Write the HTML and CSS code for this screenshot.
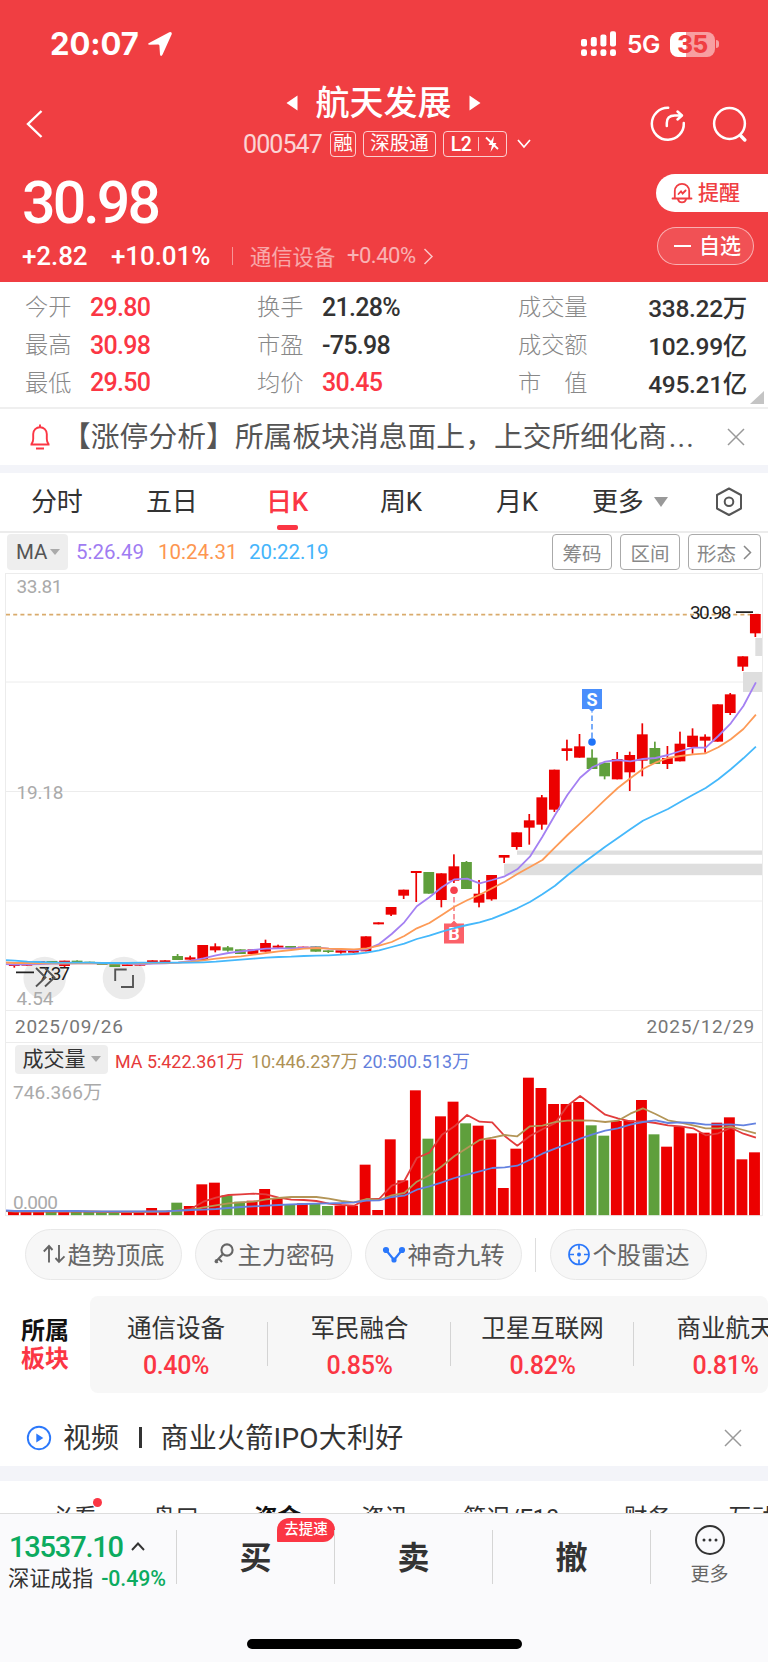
FILE: index.html
```html
<!DOCTYPE html>
<html lang="zh-CN">
<head>
<meta charset="utf-8">
<title>航天发展 000547</title>
<link rel="stylesheet" href="styles.css">
</head>
<body>
<div class="screen">
  <header class="header">
    <div class="status">
      <span class="clock">20:07</span>
      <svg class="loc" width="26" height="26" viewBox="0 0 26 26"><path d="M1.6 12.2 22.3 1.2Q25 .3 24.8 3L15.6 23.6Q14 26.4 13 23.4L12.4 14.6Q12.2 13.4 11 13.4L2.6 13.8Q.2 13.4 1.6 12.2Z" fill="#fff"/></svg>
      <svg class="signal" width="36" height="26" viewBox="0 0 36 26" fill="#fff"><rect x="0" y="8" width="6" height="7.5" rx="2"/><rect x="9.8" y="6" width="6" height="9.5" rx="2"/><rect x="19.4" y="3.4" width="6" height="12.1" rx="2"/><rect x="29" y="0.3" width="6" height="15.2" rx="2"/><rect x="0" y="18.2" width="6" height="6.8" rx="2.2"/><rect x="9.8" y="18.2" width="6" height="6.8" rx="2.2"/><rect x="19.4" y="18.2" width="6" height="6.8" rx="2.2"/><rect x="29" y="18.2" width="6" height="6.8" rx="2.2"/></svg>
      <span class="net">5G</span>
      <span class="battery">35</span><i class="nub"></i>
    </div>
    <div class="nav">
      <svg class="back" width="18" height="30" viewBox="0 0 18 30"><path d="M15.5 2 2 15l13.5 13" fill="none" stroke="#fff" stroke-width="2.4"/></svg>
      <div class="title">
        <div class="name">
          <svg width="12" height="16" viewBox="0 0 12 16"><path d="M11.5 .5v15L.5 8z" fill="#fff"/></svg>
          <h1>航天发展</h1>
          <svg width="12" height="16" viewBox="0 0 12 16"><path d="M.5 .5v15L11.500 8z" fill="#fff"/></svg>
        </div>
        <div class="codes">
          <span class="code">000547</span><span class="tag t1">融</span><span class="tag t2">深股通</span><span class="tag t3">L2<i></i><svg width="14" height="18" viewBox="0 0 14 18" fill="none" stroke="#fff" stroke-width="1.8"><path d="M9 1 3.500 10h3.500L5.500 17l6-9H8z" fill="#fff" stroke="none"/><path d="M1 2.500 13 14"/></svg></span>
          <svg width="14" height="10" viewBox="0 0 14 10"><path d="M1 1l6 7 6-7" fill="none" stroke="#fff" stroke-width="1.7"/></svg>
        </div>
      </div>
      <div class="tools">
        <svg width="36" height="36" viewBox="0 0 36 36" fill="none" stroke="#fff" stroke-width="2.5" stroke-linecap="round" stroke-linejoin="round"><path d="M18.200 1.800A16 16 0 1 0 33.800 17M16.800 20v-3q0-7.500 8-7.500h6M27.500 5.500l4.500 4-4.500 4"/></svg>
        <svg width="36" height="36" viewBox="0 0 36 36" fill="none" stroke="#fff" stroke-width="2.500" stroke-linecap="round"><circle cx="17.500" cy="17.500" r="15.400"/><path d="M28.500 29.500l4.300 4.500" stroke-width="3.400"/></svg>
      </div>
    </div>
    <div class="quote">
      <div>
        <div class="price">30.98</div>
        <div class="change"><span class="abs">+2.82</span><span class="pct">+10.01%</span><i></i><span class="ind">通信设备</span><span class="indp">+0.40%</span><svg width="11" height="17" viewBox="0 0 11 17"><path d="M1.500 1 9 8.500 1.500 16" fill="none" stroke="#fff" stroke-width="1.500"/></svg></div>
      </div>
      <div class="pills">
        <span class="alert"><svg width="22" height="22" viewBox="0 0 22 22" fill="none" stroke="#f03d42" stroke-width="1.800" stroke-linecap="round"><path d="M1.500 16.500h19M3.800 16V9a7.200 7.200 0 0 1 14.400 0v7M7 17.500a4.200 4.200 0 0 0 8 0M7.500 12l2.500-2.700 1.600 2.200 3-3"/></svg>提醒</span>
        <span class="fav"><i></i>自选</span>
      </div>
    </div>
  </header>

  <section class="stats">
    <span>今开</span><b class="up">29.80</b><span>换手</span><b>21.28%</b><span>成交量</span><b class="r">338.22万</b>
    <span>最高</span><b class="up">30.98</b><span>市盈</span><b>-75.98</b><span>成交额</span><b class="r">102.99亿</b>
    <span>最低</span><b class="up">29.50</b><span>均价</span><b class="up">30.45</b><span>市　值</span><b class="r">495.21亿</b>
    <svg class="corner" width="14" height="13" viewBox="0 0 14 13"><path d="M14 0v13H0z" fill="#c4c4c4"/></svg>
  </section>

  <section class="notice">
    <svg width="22" height="26" viewBox="0 0 22 26" fill="none" stroke="#fb3644" stroke-width="1.900" stroke-linejoin="round"><path d="M1.500 20.500h19M2.500 20Q4.200 18 4.200 15v-5a6.800 6.800 0 0 1 13.600 0v5q0 3 1.700 5M7 24.500h8"/><path d="M11 3V.5"/></svg>
    <p>【涨停分析】所属板块消息面上，上交所细化商<span>...</span></p>
    <svg class="x" width="18" height="18" viewBox="0 0 18 18"><path d="M1 1l16 16M17 1 1 17" stroke="#999" stroke-width="1.500"/></svg>
  </section>

  <nav class="periods">
    <span>分时</span><span>五日</span><span class="on">日K</span><span>周K</span><span>月K</span><span>更多</span>
    <svg class="caret" width="14" height="10" viewBox="0 0 14 10"><path d="M0 0h14L7 10z" fill="#999"/></svg>
    <svg class="hex" width="28" height="30" viewBox="0 0 28 30" fill="none" stroke="#555" stroke-width="2" stroke-linejoin="round"><path d="M14 1.500 26 8v13.500L14 28 2 21.500V8z"/><circle cx="14" cy="14.800" r="4.300"/></svg>
  </nav>

  <div class="mabar">
    <span class="chip">MA<i></i></span>
    <span class="m5">5:26.49</span><span class="m10">10:24.31</span><span class="m20">20:22.19</span>
    <span class="btns"><span>筹码</span><span>区间</span><span class="wide">形态<svg width="9" height="15" viewBox="0 0 9 15"><path d="M1 1l6.500 6.500L1 14" fill="none" stroke="#888" stroke-width="1.500"/></svg></span></span>
  </div>

  <div class="chart">
    <svg id="kline" class="kline" width="756" height="437" viewBox="6 573 756 437"></svg>
    <div class="dates"><span>2025/09/26</span><span>2025/12/29</span></div>
    <div class="volhead"><span class="chip2">成交量<i></i></span><span class="v5">MA 5:422.361万</span><span class="v10">10:446.237万</span><span class="v20">20:500.513万</span></div>
    <svg id="volume" class="vol" width="756" height="138" viewBox="6 1078 756 138"></svg>
  </div>

  <div class="features">
    <span class="feat"><svg width="24" height="24" viewBox="0 0 24 24" fill="none" stroke="#666" stroke-width="1.900"><path d="M7 20.500V4M1.800 9.500 7 4l3.500 4M17 3v16.500M13.500 16l3.500 3.800 5.500-5.500"/></svg>趋势顶底</span>
    <span class="feat"><svg width="24" height="24" viewBox="0 0 24 24" fill="none" stroke="#666" stroke-width="2.100"><circle cx="15" cy="8" r="5.600"/><path d="M11 12 3 20.500M6.500 16.500l3.500 3.500M3.500 17.500l2 3.500"/></svg>主力密码</span>
    <span class="feat"><svg width="24" height="24" viewBox="0 0 24 24" fill="none" stroke="#2b78fb" stroke-width="2.200"><path d="M4 8l8 10 8-10"/><circle cx="4" cy="8" r="2" fill="#2b78fb"/><circle cx="12" cy="18" r="1.500" fill="#2b78fb"/><circle cx="20" cy="8" r="2" fill="#2b78fb"/></svg>神奇九转</span>
    <i class="sep"></i>
    <span class="feat"><svg width="24" height="24" viewBox="0 0 24 24" fill="none" stroke="#2b78fb" stroke-width="1.700"><circle cx="12" cy="12.500" r="10"/><path d="M12 2.500v5M12 17.500v5M2 12.500h5M17 12.500h5"/><circle cx="12" cy="12.500" r="2" fill="#2b78fb" stroke="none"/></svg>个股雷达</span>
  </div>

  <div class="sectors">
    <div class="label">所属<em>板块</em></div>
    <div class="list">
      <div><span>通信设备</span><b>0.40%</b></div>
      <div><span>军民融合</span><b>0.85%</b></div>
      <div><span>卫星互联网</span><b>0.82%</b></div>
      <div><span>商业航天</span><b>0.81%</b></div>
    </div>
  </div>

  <div class="video">
    <svg width="26" height="26" viewBox="0 0 26 26"><circle cx="13" cy="13" r="11.200" fill="none" stroke="#2b78fb" stroke-width="1.900"/><path d="M10.300 8.500v9l7-4.500z" fill="#2b78fb"/></svg>
    <span>视频</span><i></i><span>商业火箭IPO大利好</span>
    <svg class="x" width="18" height="18" viewBox="0 0 18 18"><path d="M1 1l16 16M17 1 1 17" stroke="#999" stroke-width="1.500"/></svg>
  </div>

  <nav class="sections">
    <span class="dot">必看</span><span>盘口</span><span class="on">资金</span><span>资讯</span><span>简况/F10</span><span>财务</span><span>互动</span>
  </nav>

  <footer class="footer">
    <div class="index">
      <div class="pt">13537.10<svg width="14" height="9" viewBox="0 0 14 9"><path d="M1 8l6-6.500L13 8" fill="none" stroke="#333" stroke-width="1.900"/></svg></div>
      <div class="nm">深证成指<b>-0.49%</b></div>
    </div>
    <div class="act">买<span class="badge">去提速</span></div>
    <div class="act">卖</div>
    <div class="act">撤</div>
    <div class="more"><svg width="32" height="32" viewBox="0 0 32 32"><circle cx="16" cy="16" r="14" fill="none" stroke="#333" stroke-width="2"/><g fill="#333"><circle cx="10" cy="16" r="1.500"/><circle cx="16" cy="16" r="1.500"/><circle cx="22" cy="16" r="1.500"/></g></svg>更多</div>
    <i class="home"></i>
  </footer>
</div>
<script src="chart.js"></script>
</body>
</html>
```
FILE: styles.css
```css
*{box-sizing:border-box}
body{margin:0;background:#fff;font-family:Roboto,"Noto Sans CJK SC",sans-serif;color:#333}
i,em{font-style:normal}
svg{display:block;flex:none}
.screen{width:768px;height:1662px;overflow:hidden;display:flex;flex-direction:column;white-space:nowrap}
.screen>*{flex:none}

.header{height:281.5px;background:#f03e42;color:#fff}
.status{height:88px;display:flex;align-items:center;padding:0 49px 0 50px}
.clock{font:700 31px/36px Inter,sans-serif;letter-spacing:-.1px;width:97px}
.loc{margin-right:408px}
.signal{margin-right:10px}
.net{font:600 24.5px/30px Inter,sans-serif;width:33px;letter-spacing:-.5px;margin-right:10px}
.battery{width:45px;height:25px;border-radius:8px;background:linear-gradient(90deg,#fff 35%,rgba(255,255,255,.5) 35%);color:#f03e42;font:800 24px/25px Inter,sans-serif;text-align:center;letter-spacing:-.5px}
.nub{width:3px;height:8px;margin-left:1px;border-radius:0 4px 4px 0;background:rgba(255,255,255,.5)}
.nav{height:77px;display:grid;grid-template-columns:243px 290px 1fr;padding:0}
.back{margin:21px 0 0 26px}
.title{display:flex;flex-direction:column}
.name{display:flex;align-items:center;gap:17.500px;padding-left:43px;height:30px}
.name h1{margin:0;font-size:34px;line-height:30px;font-weight:500;width:136px}
.codes{display:flex;align-items:center;height:28px;margin-top:12px;font-size:20px}
.code{font-size:25px;letter-spacing:-.9px;width:87px;opacity:.78}
.tag{height:26px;border:1.500px solid rgba(255,255,255,.75);border-radius:4px;line-height:23px;text-align:center;font-size:19.500px}
.t1{width:26px;margin-right:7px}
.t2{width:73px;margin-right:7px}
.t3{width:64px;margin-right:10px;display:flex;align-items:center;justify-content:center;gap:6px;font-weight:500;letter-spacing:-.5px}
.t3 i{width:1px;height:14px;background:rgba(255,255,255,.7);margin-left:1px}
.tools{display:flex;gap:26px;padding:18px 0 0 116.500px}
.quote{display:flex;justify-content:space-between}
.price{font-size:59px;font-weight:500;line-height:60px;letter-spacing:-2.900px;padding:8px 0 0 22px}
.change{display:flex;align-items:center;height:30px;margin-top:8px;padding-left:22px;font-size:26px;font-weight:500}
.abs{width:89px;letter-spacing:-.1px}
.pct{width:121px;letter-spacing:-.1px}
.change i{width:1px;height:18px;background:rgba(255,255,255,.45);margin-right:17px}
.ind{font-size:21.300px;font-weight:400;opacity:.55;width:97px;padding-bottom:2px}
.indp{font-size:22px;font-weight:400;opacity:.6;width:76px;letter-spacing:-.5px;padding-bottom:1px}
.change svg{opacity:.7}
.pills{padding-top:9px;width:112px;font-size:21px;line-height:38px}
.alert{display:flex;align-items:center;height:38px;background:#fff;color:#f03e42;border-radius:19px 0 0 19px;padding-left:15px;gap:5px;font-weight:500}
.fav{display:flex;align-items:center;width:97px;height:38px;margin:15px 0 0 1px;border:1px solid rgba(255,255,255,.55);background:rgba(255,255,255,.1);border-radius:19px;padding-left:16px;gap:8px;font-weight:500}
.fav i{width:17px;height:2px;background:#fff}

.stats{position:relative;height:127px;border-bottom:2px solid #efefef;padding:6px 0 0 25px;display:grid;grid-template-columns:65px 167px 65px 196px 90px 139px;grid-auto-rows:37.700px;align-items:center;font-size:23.200px;color:#888;font-weight:300}
.stats span{padding-bottom:2px}
.stats b{font-weight:500;font-size:25px;letter-spacing:-.7px;color:#333;padding-top:2px}
.stats b.up{color:#fb3644}
.stats .r{text-align:right;letter-spacing:-.3px;font-size:24.500px;padding-top:1px}
.corner{position:absolute;right:4px;bottom:3px}

.notice{height:56px;display:flex;align-items:center;padding-left:29px}
.notice p{margin:0 0 0 11px;width:662px;font-size:28.800px;line-height:40px;color:#555;padding-top:1px}
.notice p span{margin-left:2px;letter-spacing:1.200px}
.x{margin-left:2.500px}

.periods{height:68px;border-top:8px solid #f3f4f9;border-bottom:2px solid #ececec;display:grid;grid-template-columns:115px 120px 114px 116px 96px 62px 61px 28px;align-items:center;padding-left:31px;font-size:26px;line-height:40px;letter-spacing:-.2px}
.on{position:relative}
.periods .on{color:#fb3644;font-weight:500}
.periods .on::after{content:"";position:absolute;left:11px;bottom:-8px;width:21px;height:5px;border-radius:2px;background:#fb3644}

.mabar{height:40px;display:flex;align-items:center;padding:0 7px 1px 7px;font-size:20.500px}
.chip{width:61px;height:36px;border-radius:4px;background:#eee;display:flex;align-items:center;padding-left:9px;gap:3px;color:#555}
.chip i,.chip2 i{border:5px solid transparent;border-top:6px solid #aaa;border-bottom:0}
.m5{color:#a07cf2;width:82px;margin-left:8px}
.m10{color:#fd9650;width:91px}
.m20{color:#45b5fb}
.btns{margin-left:auto;display:flex;gap:8px;color:#888;font-size:19.500px}
.btns span{width:60px;height:36px;border:1.500px solid #aaa;border-radius:4px;display:flex;align-items:center;justify-content:center}
.btns .wide{width:73px;gap:7px}

.chart{margin:0 5px;border:1px solid #ececec;border-top:0;border-bottom:0;height:643px}
.kline{overflow:visible}
.dates{height:33px;border-top:1px solid #ececec;border-bottom:1px solid #ececec;display:flex;justify-content:space-between;align-items:center;padding:1px 7px 0 9px;font-size:19px;letter-spacing:.75px;color:#777}
.volhead{height:35px;display:flex;align-items:center;font-size:17.900px;padding:0 0 1px 9px}
.chip2{width:93px;height:29px;border-radius:4px;background:#eee;display:flex;align-items:center;justify-content:center;gap:5px;font-size:21px;line-height:28px;margin-right:7px;padding-bottom:1px;color:#333}
.v5{width:136px;color:#e63a3a}
.v10{width:111.500px;color:#ae9155}
.v20{color:#6480dc}
.vol{overflow:visible}
svg text{font-family:Roboto,"Noto Sans CJK SC",sans-serif}

.features{height:80px;display:flex;align-items:flex-start;padding:13px 0 0 25px}
.feat{width:157px;height:51px;border:1px solid #e8e8e8;border-radius:26px;background:#f7f7f7;display:flex;align-items:center;justify-content:center;font-size:24.300px;color:#666;margin-right:13px;padding-bottom:1px}
.features svg{margin-right:1px}
.sep{width:1px;height:34px;background:#ddd;margin:9px 14px 0 0}

.sectors{height:97px;display:flex}
.label{width:90px;padding:21px 0 0 21px;font-weight:700;font-size:24px;line-height:28px;color:#111}
.label em{display:block;color:#fb3644}
.list{width:678px;background:#f7f7f7;border-radius:8px;display:grid;grid-template-columns:178px repeat(3,183px);overflow:hidden}
.list div{position:relative;display:flex;flex-direction:column;align-items:center;padding-top:14px;font-size:24.500px;line-height:37px}
.list div:first-child{padding-right:6px}
.list div:not(:last-child)::after{content:"";position:absolute;right:0;top:26px;width:1px;height:44px;background:#d4d4d4}
.list b{font-weight:500;color:#fb3644;font-size:25px;letter-spacing:-.4px}

.video{height:73px;display:flex;align-items:center;padding:17px 0 0 26px;font-size:28px;line-height:40px}
.video span{margin-left:11px;padding-top:2px}
.video span:last-of-type{letter-spacing:.25px}
.video i{width:2.500px;height:21px;background:#333;margin:0 10px 0 20px}
.video span+i+span{margin-left:9px}
.video .x{margin-left:auto;margin-right:26px}

.sections{height:47px;border-top:15px solid #f3f4f9;display:grid;grid-template-columns:102px 102px 107px 102px 161px 104px 92px;padding:21px 0 0 50px;font-size:23.500px;line-height:32px;overflow:hidden}
.sections .on{font-weight:700;color:#111}
.dot{position:relative}
.dot::after{content:"";position:absolute;left:43px;top:-4px;width:9px;height:9px;border-radius:5px;background:#fb3644}

.footer{position:relative;height:150px;background:#fafafc;border-top:1.500px solid #ddd;display:flex;padding-top:16px}
.index{width:176px}
.pt{display:flex;align-items:center;gap:8px;padding-left:9px;font-size:29px;line-height:34px;font-weight:500;color:#0cab5f;letter-spacing:-1.200px;height:34px}
.nm{padding-left:8px;font-size:21.300px;line-height:30px}
.nm b{font-weight:500;color:#0cab5f;margin-left:8px;letter-spacing:-.1px}
.act{position:relative;width:158px;height:54px;border-left:1px solid #d5d5d5;text-align:center;font-weight:700;font-size:32px;line-height:57px}
.badge{position:absolute;left:100px;top:-12px;width:58px;height:24px;border-radius:12px 12px 12px 1px;background:#fb3644;color:#fff;font-size:14.500px;line-height:24px;font-weight:500}
.more{width:118px;height:54px;border-left:1px solid #d5d5d5;display:flex;flex-direction:column;align-items:center;font-size:19px;line-height:24px;color:#666}
.more svg{margin:-6px 0 7px}
.home{position:absolute;left:247px;bottom:14px;width:275px;height:10px;border-radius:5px;background:#000}
```
FILE: chart.js
```js
// Candle rows: [high, bodyTop, bodyBottom, low, isDown], in thirds of a pixel below the plot origin.
const C = [
[1214,1214,1218,1223],[1213,1213,1217,1217],[1203,1203,1207,1207],[1203,1203,1207,1207,1],[1202,1202,1218,1221],[1201,1202,1206,1206,1],[1205,1205,1208,1208,1],[1209,1209,1215,1215,1],[1210,1210,1221,1221,1],[1213,1213,1218,1218],
[1213,1213,1217,1217],[1201,1201,1207,1207],[1201,1201,1207,1207],[1182,1188,1200,1200,1],[1187,1192,1199,1199],[1155,1155,1200,1200],[1150,1159,1171,1177],[1158,1162,1172,1175,1],[1168,1168,1182,1182,1],[1168,1168,1182,1182],
[1139,1149,1175,1175],[1154,1157,1163,1163],[1158,1158,1164,1164,1],[1160,1160,1165,1165],[1159,1159,1175,1175,1],[1171,1171,1176,1179,1],[1171,1171,1178,1181],[1172,1172,1178,1178],[1129,1129,1174,1174],[1087,1087,1093,1093],
[1041,1041,1064,1068],[989,989,1007,1017],[933,933,939,1026],[936,936,1001,1001,1],[940,940,1020,1042],[883,919,962,969],[903,906,987,987,1],[960,1001,1028,1042],[945,945,1018,1022],[885,885,893,909],
[817,817,861,869],[762,781,803,854],[705,712,794,809],[629,629,749,756],[539,565,573,602],[522,559,593,593],[568,593,627,627,1],[608,608,649,658,1],[576,597,658,658],[575,585,637,693],
[490,523,602,649],[545,564,612,612,1],[558,594,612,627],[515,551,604,604],[505,527,561,581],[523,530,542,578],[433,433,545,545],[399,403,459,465],[289,289,320,333],[162,162,220,231]];
const VTOP = [605,605,605,605,602,605,605,605,605,607,607,594,605,578,588,523,518,556,575,572,537,565,582,580,582,588,587,587,464,600,388,511,241,386,319,275,340,347,388,534,416,203,234,282,282,276,346,377,333,331,270,373,410,349,370,368,338,322,448,427];
const VDOWN = new Set([3,5,6,7,8,13,17,18,22,24,25,33,36,46,47,51]);
const M5 = [1214,1213,1212,1211,1211,1210,1210,1210,1210,1211,1213,1211,1210,1208,1203,1195,1186,1179,1174,1170,1166,1165,1165,1163,1162,1166,1169,1171,1168,1152,1122,1087,1039,1012,982,958,956,970,960,949,928,890,830,765,704,653,621,605,600,604,597,594,585,573,563,563,528,490,438,367];
const M10 = [1209,1209,1210,1210,1210,1210,1210,1210,1210,1210,1210,1209,1209,1208,1206,1201,1196,1192,1189,1184,1179,1174,1170,1166,1164,1166,1167,1168,1165,1157,1146,1128,1105,1089,1065,1040,1021,1004,985,965,942,921,900,862,825,790,755,719,684,655,627,608,594,588,583,580,562,538,507,464];
const M20 = [1202,1205,1206,1208,1208,1208,1208,1209,1209,1209,1208,1208,1208,1208,1208,1207,1205,1202,1199,1196,1193,1191,1190,1188,1187,1186,1184,1182,1178,1171,1161,1151,1137,1127,1115,1104,1095,1087,1076,1061,1045,1026,1003,977,946,916,888,860,834,808,782,764,747,725,704,684,658,628,595,560];
const V5 = [605,605,605,605,605,605,605,606,606,606,606,605,605,602,597,575,563,555,553,551,553,563,569,570,573,581,585,587,567,567,527,513,444,428,374,349,315,335,337,378,407,378,358,340,287,258,286,314,325,334,334,339,346,349,355,376,370,353,371,383];
const V10 = [604,604,604,604,604,604,604,605,605,605,605,605,604,602,600,592,586,580,577,575,568,564,561,561,561,566,573,577,567,570,556,549,515,496,469,438,414,390,383,375,379,349,347,336,332,331,332,336,332,311,295,312,331,338,346,355,355,350,360,370];
const V20 = [603,603,603,603,603,603,604,604,604,604,604,604,604,602,600,599,597,594,591,589,587,585,583,582,581,580,579,577,572,571,561,557,539,529,517,504,494,484,474,472,467,449,431,416,402,386,373,362,355,344,336,331,339,337,339,344,344,343,346,340];
const RED = '#ec0000', GREEN = '#5f9f3c', STEP = 12.56;

const line = (d, oy, color) => {
  const pts = d.map((v, i) => `${(14.9 + STEP * i).toFixed(1)},${(oy + v / 3).toFixed(1)}`);
  return `<polyline points="6,${(oy + d[0] / 3 - 0.5).toFixed(1)} ${pts.join(' ')}" fill="none" stroke="${color}" stroke-width="1.8" stroke-linejoin="round"/>`;
};
const hline = y => `<path d="M6 ${y}H762" stroke="#ececec"/>`;
const rect = (x, y, w, h, f) => `<rect x="${x}" y="${y}" width="${w}" height="${h}" fill="${f}"/>`;
const label = (x, y, len, s, f) => `<text x="${x}" y="${y}" font-size="19" fill="${f}" textLength="${len}">${s}</text>`;

let k = [573.5, 682, 791.5, 901].map(hline).join('');
k += rect(517, 850.5, 245, 4.3, '#dedede') + rect(504, 863.7, 258, 11.5, '#dedede') + rect(743, 672, 19, 20, '#dedede') + rect(755.3, 638, 6.7, 18, '#dedede');
k += label(16.5, 593, 46, '33.81', '#aaa') + label(16.5, 799, 47, '19.18', '#aaa');
k += '<circle cx="44.700" cy="978" r="21.300" fill="#ebebeb"/><circle cx="124" cy="978" r="21.300" fill="#ebebeb"/>';
k += label(16.5, 1005, 37, '4.54', '#aaa');
k += '<path d="M6 614.700H762" stroke="#d9ab6c" stroke-width="1.700" stroke-dasharray="4 3.200"/>';
C.forEach(([h, t, b, l, down], i) => {
  const x = 14.3 + STEP * i, f = down ? GREEN : RED, y = v => 560 + v / 3;
  k += rect(x - 5.4, y(t), 10.8, (b - t) / 3, f) + rect(x - 0.85, y(h), 1.7, (l - h) / 3, f);
});
// Trade markers.
k += '<path d="M592 738V712" stroke="#6aa3f8" stroke-width="1.800" stroke-dasharray="5.500 3"/><circle cx="592" cy="742" r="3.800" fill="#1f74f8"/><path d="M582 689h20v20h-7l-3 3-3-3h-7z" fill="#4a8ffc"/><text x="592" y="705.500" text-anchor="middle" font-size="18" font-weight="700" fill="#fff">S</text>';
k += '<path d="M454 897v23" stroke="#f88b92" stroke-width="1.800" stroke-dasharray="5.500 3"/><circle cx="454" cy="890.200" r="3.800" fill="#f6404c"/><path d="M444 943.500h20v-20h-7l-3-3-3 3h-7z" fill="#fb6169"/><text x="454" y="940" text-anchor="middle" font-size="18" font-weight="700" fill="#fff">B</text>';
k += line(M5, 560, '#a480f2') + line(M10, 560, '#fd9a56') + line(M20, 560, '#45b8fb');
k += '<path d="M16 972.400h18M736 612.200h17" stroke="#222" stroke-width="1.700"/>' + label(39, 980, 31, '7.37', '#222') + label(690, 619, 41.5, '30.98', '#222');
k += '<path d="M36 968l9.500 9.500-9.500 9M45 968l9.500 9.500-9.500 9M115.200 981v-11.500h11.500M133 975v12h-12" fill="none" stroke="#555" stroke-width="1.900"/>';
document.getElementById('kline').innerHTML = k;

let v = label(13, 1099, 89, '746.366万', '#aaa') + label(13, 1209, 45, '0.000', '#aaa');
VTOP.forEach((t, i) => { v += rect((8.0 + STEP * i).toFixed(2), 1010 + t / 3, 10.9, (617 - t) / 3, VDOWN.has(i) ? GREEN : RED); });
v += line(V5, 1010, '#e23c3c') + line(V10, 1010, '#b39557') + line(V20, 1010, '#6482e0') + hline(1215.7);
document.getElementById('volume').innerHTML = v;
```
